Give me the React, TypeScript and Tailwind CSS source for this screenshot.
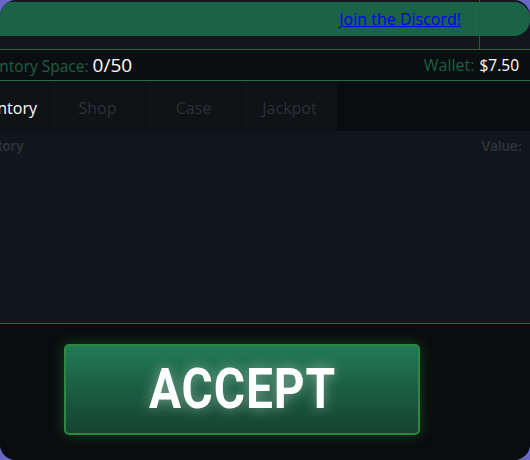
const tabs = ["Inventory", "Shop", "Case", "Jackpot"]

export default function App() {
  return (
    <div className="w-[530px] h-[460px] bg-[#6a68c6] overflow-hidden" style={{ fontFamily: '"Open Sans", sans-serif' }}>
      <div className="relative w-[530px] h-[460px] rounded-2xl bg-[#13171b] overflow-hidden">
        <div className="absolute left-[479px] top-0 h-[49px] w-px bg-[#1d5e40]" />
        <div className="-ml-[46px] w-[576px] flex flex-col h-full pt-[2px]">
          <div className="h-[34px] bg-[#1b6347] rounded-2xl flex items-center justify-end pr-[69px]">
            <a href="#" className="text-[#0000ee] underline text-[16px] leading-none">Join the Discord!</a>
          </div>
          <div className="h-[14px] border-b border-[#1f6e48]" />
          <div className="h-[31px] bg-[#0b0e10] border-b border-[#1f6e48] flex items-center justify-between pl-[15px] pr-[11px]">
            <div className="flex items-baseline gap-[4px]">
              <span className="text-[15.5px] text-[#1c6043]">Inventory Space:</span>
              <span className="text-[19px] text-white">0/50</span>
            </div>
            <div className="flex items-baseline gap-[5px]">
              <span className="text-[16px] text-[#1c6043]">Wallet:</span>
              <span className="text-[15.5px] text-white">$7.50</span>
            </div>
          </div>
          <div className="h-[50px] bg-[#0a0d0f] flex gap-px">
            {tabs.map((t, i) => (
              <div key={t} className={`w-[95px] bg-[#0f1316] flex items-center justify-center pt-[3px] text-[16px] ${i === 0 ? "text-white" : "text-[#2b3137]"}`}>
                {t}
              </div>
            ))}
          </div>
          <div className="h-[193px] bg-[#11161a] border-b border-[#1f6e48] px-2 pt-[5px] flex justify-between" style={{ fontFamily: "Inter, sans-serif" }}>
            <span className="text-[13.5px] font-semibold text-[#2c343b]">Inventory</span>
            <span className="text-[13.5px] font-semibold text-[#2c343b]">Value:</span>
          </div>
          <div className="flex-1 bg-[#0a0d0f] flex justify-center pt-5">
            <button className="w-[356px] h-[91px] rounded-[5px] border-2 border-[#2c8a3f] bg-gradient-to-b from-[#227a56] to-[#14432f] shadow-[0_0_14px_rgba(40,170,60,0.35)] flex items-center justify-center">
              <span
                className="inline-block scale-x-[0.87] text-white font-bold text-[55px] leading-none tracking-[1px] [text-shadow:0_0_14px_rgba(255,255,255,0.45)]"
                style={{ fontFamily: "Roboto, sans-serif" }}
              >
                ACCEPT
              </span>
            </button>
          </div>
        </div>
      </div>
    </div>
  )
}
